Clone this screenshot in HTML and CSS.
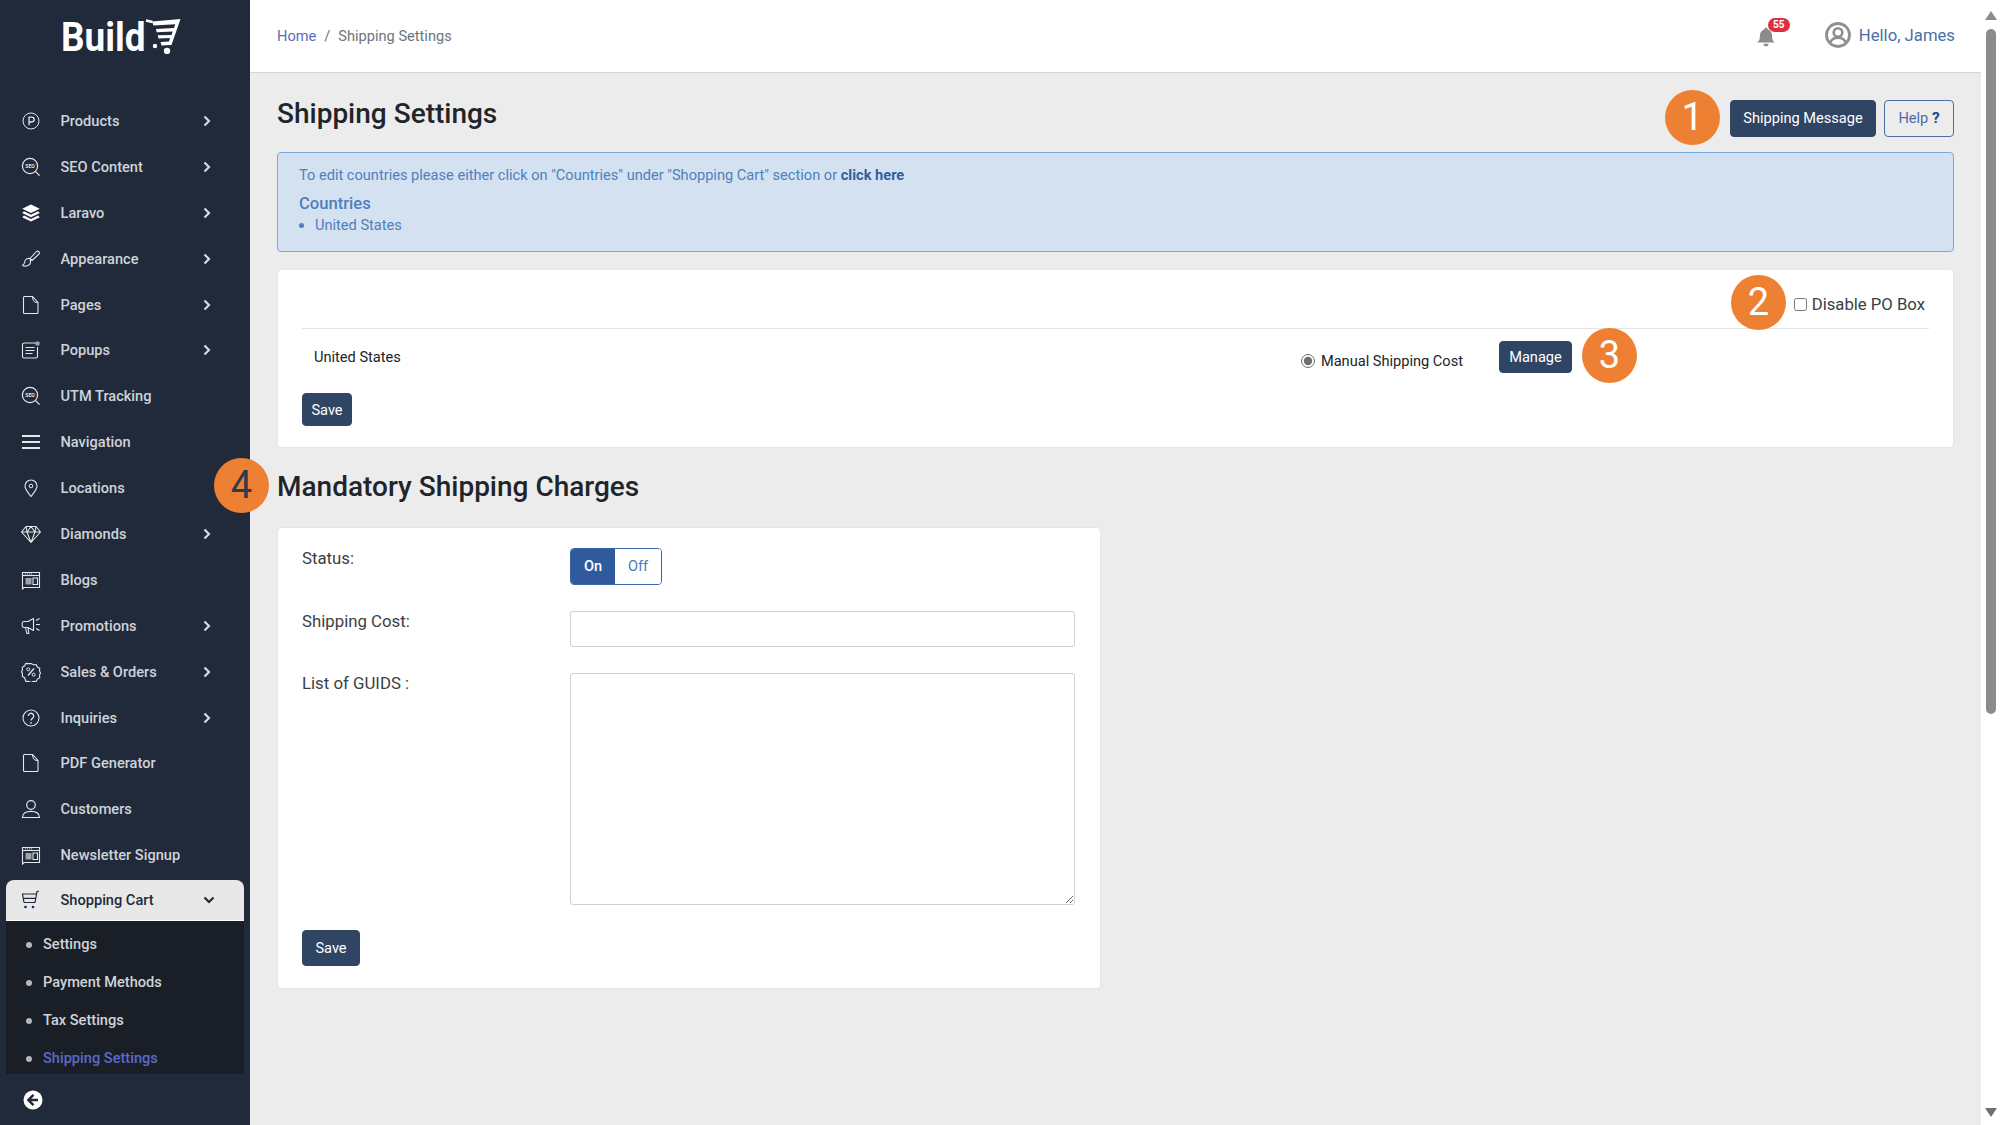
FILE: index.html
```html
<!DOCTYPE html>
<html lang="en">
<head>
<meta charset="utf-8">
<title>Shipping Settings</title>
<link rel="stylesheet" href="styles.css">
</head>
<body>
<svg class="defs" aria-hidden="true">
  <symbol id="i-p" viewBox="0 0 20 20"><circle cx="10" cy="10" r="8" fill="none" stroke="currentColor"/><path d="M8 14.2V6.2h2.8a2.4 2.4 0 0 1 0 4.8H8" fill="none" stroke="currentColor" stroke-width="1.3"/></symbol>
  <symbol id="i-seo" viewBox="0 0 20 20"><circle cx="9" cy="9" r="7.6" fill="none" stroke="currentColor" stroke-width="1.2"/><path d="M14.6 14.6l4 4" stroke="currentColor" stroke-width="1.3"/><text x="9" y="10.8" text-anchor="middle" font-size="5" font-weight="700" font-family="Roboto, sans-serif" fill="currentColor">SEO</text></symbol>
  <symbol id="i-layers" viewBox="0 0 20 20"><path d="M10 1.500l8.800 4.300L10 10 1.200 5.800z" fill="#fff"/><path d="M3 8.300L1.200 10l8.800 4.300 8.800-4.300L17 8.300 10 11.700z" fill="#fff"/><path d="M3 12.500l-1.800 1.700L10 18.500l8.800-4.300-1.800-1.700-7 3.400z" fill="#fff"/></symbol>
  <symbol id="i-brush" viewBox="0 0 20 20"><path d="M9 9.500l6.500-7a1.800 1.800 0 0 1 2.500 2.500l-7 6.500zM9 9.500c-3-.5-5 1-5.300 3.500-.2 1.500-1.200 2.800-2.200 3.500 2.800 1.300 7.800.5 8-3.200.1-1-.2-1.800-.5-3.800z" fill="none" stroke="currentColor" stroke-width="1.100" stroke-linejoin="round"/></symbol>
  <symbol id="i-page" viewBox="0 0 20 20"><path d="M3.500 1.500h8l5.500 6v10a1 1 0 0 1-1 1H3.500a1 1 0 0 1-1-1v-15a1 1 0 0 1 1-1zM11.500 1.500c0 4 1 6 5.500 6" fill="none" stroke="currentColor" stroke-width="1.100"/></symbol>
  <symbol id="i-popup" viewBox="0 0 20 20"><path d="M15 3H3a1.500 1.500 0 0 0-1.500 1.500v12A1.500 1.500 0 0 0 3 18h12a1.500 1.500 0 0 0 1.500-1.500V7" fill="none" stroke="currentColor" stroke-width="1.100"/><path d="M4.500 7.500h9M4.500 10.500h9M4.500 13.500h7" stroke="currentColor" stroke-width="1.200"/><circle cx="16.500" cy="3.500" r="2.300" fill="#9aa0ab"/></symbol>
  <symbol id="i-nav" viewBox="0 0 20 20"><path d="M1 4h18M1 10h18M1 16h18" stroke="currentColor" stroke-width="1.800"/></symbol>
  <symbol id="i-pin" viewBox="0 0 20 20"><path d="M10 18.500C7 14.500 4 11.500 4 8a6 6 0 0 1 12 0c0 3.500-3 6.500-6 10.500z" fill="none" stroke="currentColor" stroke-width="1.100"/><circle cx="10" cy="8" r="1.800" fill="none" stroke="currentColor"/></symbol>
  <symbol id="i-gem" viewBox="0 0 20 20"><path d="M5 2.500h10L19.500 8 10 18.500.5 8zM.5 8h19M6 8l4 10.500L14 8M5 2.500L6 8l4-5.500L14 8l1-5.500" fill="none" stroke="currentColor" stroke-width="1.100" stroke-linejoin="round"/></symbol>
  <symbol id="i-news" viewBox="0 0 20 20"><path d="M1.500 19V2.500h17v15H3z" fill="none" stroke="currentColor" stroke-width="1.100"/><path d="M2 5.500h16" stroke="currentColor" stroke-width="1.100"/><path d="M4 3.900h7" stroke="currentColor" stroke-dasharray="1 1"/><path d="M4.500 8h6v6.500h-6z" fill="currentColor" opacity=".65"/><path d="M12 8h4.500v6.500H12z" fill="none" stroke="currentColor" stroke-width="1.100"/></symbol>
  <symbol id="i-mega" viewBox="0 0 20 20"><path d="M12.500 2.500v12L7 11.500H3a1.800 1.800 0 0 1-1.800-1.800V7.300A1.800 1.800 0 0 1 3 5.500h4zM4.500 11.500l1.300 6h2l-.8-6" fill="none" stroke="currentColor" stroke-width="1.100" stroke-linejoin="round"/><path d="M15 4.500l3.500-2M15 8.500h4M15 12.500l3.500 2" stroke="currentColor" stroke-width="1.100"/></symbol>
  <symbol id="i-pct" viewBox="0 0 20 20"><path d="M10 1.500l2.400 1.300 2.700-.2 1.300 2.400 2.300 1.400-.2 2.700 1 1.900-1 2.100.2 2.700-2.300 1.300-1.300 2.400-2.700-.2-2.400 1.200-2.400-1.200-2.700.2L3.600 15.700l-2.300-1.300.2-2.700L.5 9.800l1-1.900-.2-2.700 2.300-1.400 1.300-2.400 2.700.2z" fill="none" stroke="currentColor" stroke-width="1.100"/><path d="M13 6.500L7 13.500" stroke="currentColor" stroke-width="1.300"/><circle cx="7.300" cy="7.300" r="1.500" fill="none" stroke="currentColor"/><circle cx="12.700" cy="12.700" r="1.500" fill="none" stroke="currentColor"/></symbol>
  <symbol id="i-q" viewBox="0 0 20 20"><circle cx="10" cy="10" r="8" fill="none" stroke="currentColor" stroke-width="1.100"/><path d="M7.300 8a2.700 2.700 0 1 1 4.400 2.100c-1 .7-1.700 1.200-1.700 2.400" fill="none" stroke="currentColor" stroke-width="1.300"/><circle cx="10" cy="14.800" r=".9" fill="currentColor"/></symbol>
  <symbol id="i-user" viewBox="0 0 20 20"><circle cx="10" cy="6" r="4.300" fill="none" stroke="currentColor" stroke-width="1.200"/><path d="M1.500 18.500c0-4.500 3.500-6.200 8.500-6.200s8.500 1.700 8.500 6.200z" fill="none" stroke="currentColor" stroke-width="1.200"/></symbol>
  <symbol id="i-cart" viewBox="0 0 20 20"><path d="M17.800 1l-1.800.7L14 12.500H3M1 4h14M2 8.300h12.200M1.500 4l1.500 8.500" fill="none" stroke="currentColor" stroke-width="1.200"/><circle cx="4.500" cy="17" r="1.300" fill="currentColor"/><circle cx="12" cy="17" r="1.300" fill="currentColor"/></symbol>
  <symbol id="i-right" viewBox="0 0 8 12"><path d="M1.500 1.500L6 6l-4.500 4.500" fill="none" stroke="currentColor" stroke-width="2.200"/></symbol>
  <symbol id="i-down" viewBox="0 0 12 8"><path d="M1.500 1.500L6 6l4.500-4.500" fill="none" stroke="currentColor" stroke-width="2.200"/></symbol>
</svg>

<div class="app">
  <aside class="sidebar">
    <div class="logo">
      <span class="logo-text">Build</span>
      <svg class="logo-cart" viewBox="0 0 36 36"><path d="M1 2.500l6.500 1.500" stroke="#fff" stroke-width="2.400" fill="none"/><path d="M7 3.500L35.500 1l-9 26L16.500 27.500 15.500 24l8.500-.5 1-3.500-11.500.5-.8-3.300L26.500 17l1.200-3.500-16 .7-.8-3.300L29 10l1.300-3.700L8.500 7.500z" fill="#fff"/><circle cx="10" cy="28" r="2.200" fill="#fff"/><circle cx="22" cy="33" r="3.200" fill="#fff"/></svg>
    </div>
    <nav class="menu">
      <a class="item"><svg class="ico"><use href="#i-p"/></svg><span>Products</span><svg class="chev"><use href="#i-right"/></svg></a>
      <a class="item"><svg class="ico"><use href="#i-seo"/></svg><span>SEO Content</span><svg class="chev"><use href="#i-right"/></svg></a>
      <a class="item"><svg class="ico"><use href="#i-layers"/></svg><span>Laravo</span><svg class="chev"><use href="#i-right"/></svg></a>
      <a class="item"><svg class="ico"><use href="#i-brush"/></svg><span>Appearance</span><svg class="chev"><use href="#i-right"/></svg></a>
      <a class="item"><svg class="ico"><use href="#i-page"/></svg><span>Pages</span><svg class="chev"><use href="#i-right"/></svg></a>
      <a class="item"><svg class="ico"><use href="#i-popup"/></svg><span>Popups</span><svg class="chev"><use href="#i-right"/></svg></a>
      <a class="item"><svg class="ico"><use href="#i-seo"/></svg><span>UTM Tracking</span></a>
      <a class="item"><svg class="ico"><use href="#i-nav"/></svg><span>Navigation</span></a>
      <a class="item"><svg class="ico"><use href="#i-pin"/></svg><span>Locations</span></a>
      <a class="item"><svg class="ico"><use href="#i-gem"/></svg><span>Diamonds</span><svg class="chev"><use href="#i-right"/></svg></a>
      <a class="item"><svg class="ico"><use href="#i-news"/></svg><span>Blogs</span></a>
      <a class="item"><svg class="ico"><use href="#i-mega"/></svg><span>Promotions</span><svg class="chev"><use href="#i-right"/></svg></a>
      <a class="item"><svg class="ico"><use href="#i-pct"/></svg><span>Sales &amp; Orders</span><svg class="chev"><use href="#i-right"/></svg></a>
      <a class="item"><svg class="ico"><use href="#i-q"/></svg><span>Inquiries</span><svg class="chev"><use href="#i-right"/></svg></a>
      <a class="item"><svg class="ico"><use href="#i-page"/></svg><span>PDF Generator</span></a>
      <a class="item"><svg class="ico"><use href="#i-user"/></svg><span>Customers</span></a>
      <a class="item"><svg class="ico"><use href="#i-news"/></svg><span>Newsletter Signup</span></a>
      <a class="item active"><svg class="ico"><use href="#i-cart"/></svg><span>Shopping Cart</span><svg class="chev-down"><use href="#i-down"/></svg></a>
      <ul class="submenu">
        <li>Settings</li>
        <li>Payment Methods</li>
        <li>Tax Settings</li>
        <li class="current">Shipping Settings</li>
      </ul>
    </nav>
    <div class="collapse">
      <svg viewBox="0 0 20 20" width="20" height="20"><circle cx="10" cy="10" r="9.500" fill="#fff"/><path d="M10.500 4.800L5.300 10l5.200 5.200M5.800 10H15" fill="none" stroke="#212a3b" stroke-width="2.400"/></svg>
    </div>
  </aside>

  <div class="main">
    <header class="topbar">
      <div class="crumbs"><a class="crumb-link">Home</a><span class="crumb-sep">/</span><span class="crumb-now">Shipping Settings</span></div>
      <div class="top-right">
        <div class="bell">
          <svg viewBox="0 0 18 18" width="20" height="20"><path d="M9 .5a1.400 1.400 0 0 1 1.400 1.500C13 2.700 14.500 5 14.500 8c0 3.500 1 4.600 2.500 6H1c1.500-1.400 2.500-2.500 2.500-6 0-3 1.500-5.300 4.100-6A1.400 1.400 0 0 1 9 .5zM6.700 15h4.600a2.300 2.300 0 0 1-4.600 0z" fill="#8b8b8b"/></svg>
          <span class="bell-count">55</span>
        </div>
        <div class="hello">
          <svg viewBox="0 0 26 26" width="26" height="26"><circle cx="13" cy="13" r="11.500" fill="none" stroke="#8f8f8f" stroke-width="2.800"/><circle cx="13" cy="10.500" r="4.300" fill="none" stroke="#8f8f8f" stroke-width="2.600"/><path d="M5.500 20.500c1-3.500 4-4.700 7.500-4.700s6.500 1.200 7.500 4.700" fill="none" stroke="#8f8f8f" stroke-width="2.600"/></svg>
          <span>Hello, James</span>
        </div>
      </div>
    </header>

    <main class="page">
      <div class="title-row">
        <h1 class="title">Shipping Settings</h1>
        <div class="title-actions">
          <button class="btn btn-dark btn-msg">Shipping Message</button>
          <button class="btn btn-help">Help <b>?</b></button>
        </div>
      </div>

      <section class="alert">
        <p class="alert-line">To edit countries please either click on "Countries" under "Shopping Cart" section or <b>click here</b></p>
        <h4 class="alert-head">Countries</h4>
        <ul class="alert-list"><li>United States</li></ul>
      </section>

      <section class="card card-ship">
        <div class="po-row"><label class="po"><input type="checkbox"><span>Disable PO Box</span></label></div>
        <div class="country-row">
          <span class="country">United States</span>
          <label class="method"><input type="radio" checked><span>Manual Shipping Cost</span></label>
          <button class="btn btn-dark btn-manage">Manage</button>
        </div>
        <button class="btn btn-dark btn-save1">Save</button>
      </section>

      <h2 class="subtitle">Mandatory Shipping Charges</h2>

      <section class="card card-form">
        <div class="form-grid">
          <label class="f-label">Status:</label>
          <div class="toggle"><span class="t-on">On</span><span class="t-off">Off</span></div>
          <label class="f-label">Shipping Cost:</label>
          <input class="f-input" type="text">
          <label class="f-label">List of GUIDS :</label>
          <textarea class="f-area"></textarea>
        </div>
        <button class="btn btn-dark btn-save2">Save</button>
      </section>
    </main>
  </div>

  <div class="scrollbar">
    <span class="arrow-up"></span>
    <span class="thumb"></span>
    <span class="arrow-down"></span>
  </div>

  <span class="step step-1">1</span>
  <span class="step step-2">2</span>
  <span class="step step-3">3</span>
  <span class="step step-4">4</span>
</div>
</body>
</html>
```

FILE: styles.css
```css
* { box-sizing: border-box; }
html, body { margin: 0; height: 100%; overflow: hidden; }
body { font-family: Roboto, "Liberation Sans", sans-serif; font-size: 14.6px; color: #212529; background: #ececec; }
.defs { display: none; }
.app { position: relative; display: flex; width: 2000px; height: 1125px; overflow: hidden; }

/* sidebar */
.sidebar { flex: 0 0 250px; background: #212a3b; display: flex; flex-direction: column; color: #cfd3da; }
.logo { height: 98px; display: flex; align-items: flex-start; padding: 13px 0 0 61px; }
.logo-text { color: #fff; font-size: 41px; font-weight: 700; line-height: 48px; transform: scaleX(.9); transform-origin: left; width: 84px; }
.logo-cart { width: 36px; height: 36px; margin-top: 5px; }
.menu { display: flex; flex-direction: column; }
.item { display: flex; align-items: center; height: 45.9px; padding: 0 39px 0 21px; font-weight: 500; }
.ico { width: 20px; height: 20px; margin-right: 19.5px; flex: none; color: #e4e6ea; }
.chev { width: 8px; height: 12px; margin-left: auto; color: #d5d9e0; }
.item.active { height: 41px; margin: 2px 6px 0; padding: 0 29px 0 15px; background: #e8e8e8; color: #212a3b; border-radius: 8px 8px 0 0; border-bottom: 1px solid #fff; }
.item.active .ico { color: #212a3b; }
.chev-down { width: 12px; height: 8px; margin-left: auto; color: #212a3b; }
.submenu { list-style: none; margin: 0 6px; padding: 5px 0 0; height: 153px; overflow: hidden; background: #1a1e26; }
.submenu li { position: relative; height: 37.8px; line-height: 37.8px; padding-left: 37px; font-weight: 500; }
.submenu li::before { content: ""; position: absolute; left: 20px; top: 16px; width: 6px; height: 6px; border-radius: 50%; background: #b4b7bd; }
.submenu li.current { color: #5b6bc7; }
.collapse { padding: 16px 0 0 23px; }

/* main */
.main { flex: 1; min-width: 0; display: flex; flex-direction: column; }
.topbar { height: 73px; flex: none; background: #fff; border-bottom: 1px solid #d6d6d6; display: flex; align-items: center; justify-content: space-between; padding: 0 26px 0 27px; }
.crumbs { display: flex; gap: 8px; color: #6c757d; margin-top: -1px; }
.crumb-link { color: #5b6bc0; }
.top-right { display: flex; align-items: center; margin-top: -2px; }
.bell { position: relative; display: flex; margin-right: 49px; padding-top: 3px; }
.bell-count { position: absolute; left: 12px; top: -6px; width: 22px; height: 14px; border-radius: 7px; background: #dc2f40; color: #fff; font-size: 10px; font-weight: 700; line-height: 14px; text-align: center; }
.hello { display: flex; align-items: center; gap: 8px; color: #4a6fa5; font-size: 16.7px; }

.page { padding: 25px 27px 0; }
.title-row { display: flex; justify-content: space-between; align-items: flex-start; height: 39px; margin-bottom: 15px; }
.title { margin: 0; font-size: 28px; line-height: 31px; font-weight: 500; color: #212529; }
.title-actions { display: flex; gap: 8px; margin-top: 2px; }
.btn { font-family: inherit; font-size: 14.6px; border-radius: 4px; cursor: pointer; padding: 0; }
.btn-dark { background: #304463; border: 1px solid #304463; color: #fff; }
.btn-msg { width: 146px; height: 37px; padding-bottom: 2px; }
.btn-help { width: 70px; height: 37px; padding-bottom: 2px; background: transparent; border: 1px solid #4a6fa5; color: #4a6fa5; }
.btn-help b { color: #23478c; font-size: 15.5px; }

.alert { height: 100px; margin-bottom: 17px; padding: 14px 21px 0; background: #d4e1f0; border: 1px solid #79a8e0; border-radius: 4px; color: #4f7fbd; }
.alert-line { margin: 0; line-height: 17px; }
.alert-line b { color: #2f5f9e; font-weight: 700; }
.alert-head { margin: 9px 0 0; font-size: 16.6px; font-weight: 500; line-height: 22px; }
.alert-list { margin: 0; padding: 0 0 0 16px; line-height: 20px; }

.card { background: #fff; border: 1px solid #e6e6e6; border-radius: 4px; }
.card-ship { height: 179px; padding: 0 24px; }
.po-row { height: 59px; border-bottom: 1px solid #e4e4e4; display: flex; justify-content: flex-end; align-items: center; padding: 11px 4px 0 0; }
.po { display: flex; align-items: center; gap: 5px; font-size: 16.7px; color: #3a3f45; }
.po input { margin: 0; width: 13px; height: 13px; }
.country-row { display: flex; align-items: flex-start; padding: 12px 357px 0 12px; height: 45px; }
.country { flex: 1; line-height: 32px; }
.method { display: flex; align-items: center; gap: 6px; margin-top: 11px; margin-right: 36px; }
.method input { margin: 0; width: 14px; height: 14px; accent-color: #6f6f6f; }
.btn-manage { width: 73px; height: 32px; }
.btn-save1 { display: block; width: 50px; height: 33px; margin-top: 19px; }

.subtitle { margin: 22px 0 23px; font-size: 28px; line-height: 34px; font-weight: 500; }
.card-form { width: 824px; height: 462px; padding: 20px 24px 0; }
.form-grid { display: grid; grid-template-columns: 268px 505px; row-gap: 25.500px; align-items: start; }
.f-label { font-size: 16.8px; line-height: 20px; color: #3a3f45; }
.toggle { display: flex; width: 92px; height: 37px; border: 1px solid #3a66a8; border-radius: 4px; overflow: hidden; line-height: 35px; text-align: center; }
.t-on { width: 44px; background: #2f5a9e; color: #fff; font-weight: 500; }
.t-off { flex: 1; color: #4a7ab8; background: #fff; }
.f-input { display: block; width: 505px; height: 36.500px; border: 1px solid #cfcfd6; border-radius: 3px; background: #fff; }
.f-area { display: block; width: 505px; height: 232px; margin: 0; border: 1px solid #cfcfd6; border-radius: 3px; background: #fff; }
.btn-save2 { display: block; width: 58px; height: 36px; margin-top: 25px; }

/* browser scrollbar */
.scrollbar { flex: 0 0 19px; background: #fff; display: flex; flex-direction: column; align-items: center; padding: 11px 0 8px; }
.thumb { width: 10px; height: 685px; margin: 9px 0 auto; border-radius: 5px; background: #8b8b8b; }
.arrow-up { width: 0; height: 0; border: 6px solid transparent; border-top: 0; border-bottom: 9px solid #8b8b8b; }
.arrow-down { width: 0; height: 0; border: 6px solid transparent; border-bottom: 0; border-top: 9px solid #6f6f6f; }

/* callout numbers */
.step { position: absolute; width: 55px; height: 55px; border-radius: 50%; background: #ee8033; color: #fff; font-size: 38px; line-height: 55px; text-align: center; }
.step-1 { left: 1665px; top: 90px; }
.step-2 { left: 1731px; top: 275px; }
.step-3 { left: 1582px; top: 328px; }
.step-4 { left: 214px; top: 458px; color: #2f3a4a; }
```
